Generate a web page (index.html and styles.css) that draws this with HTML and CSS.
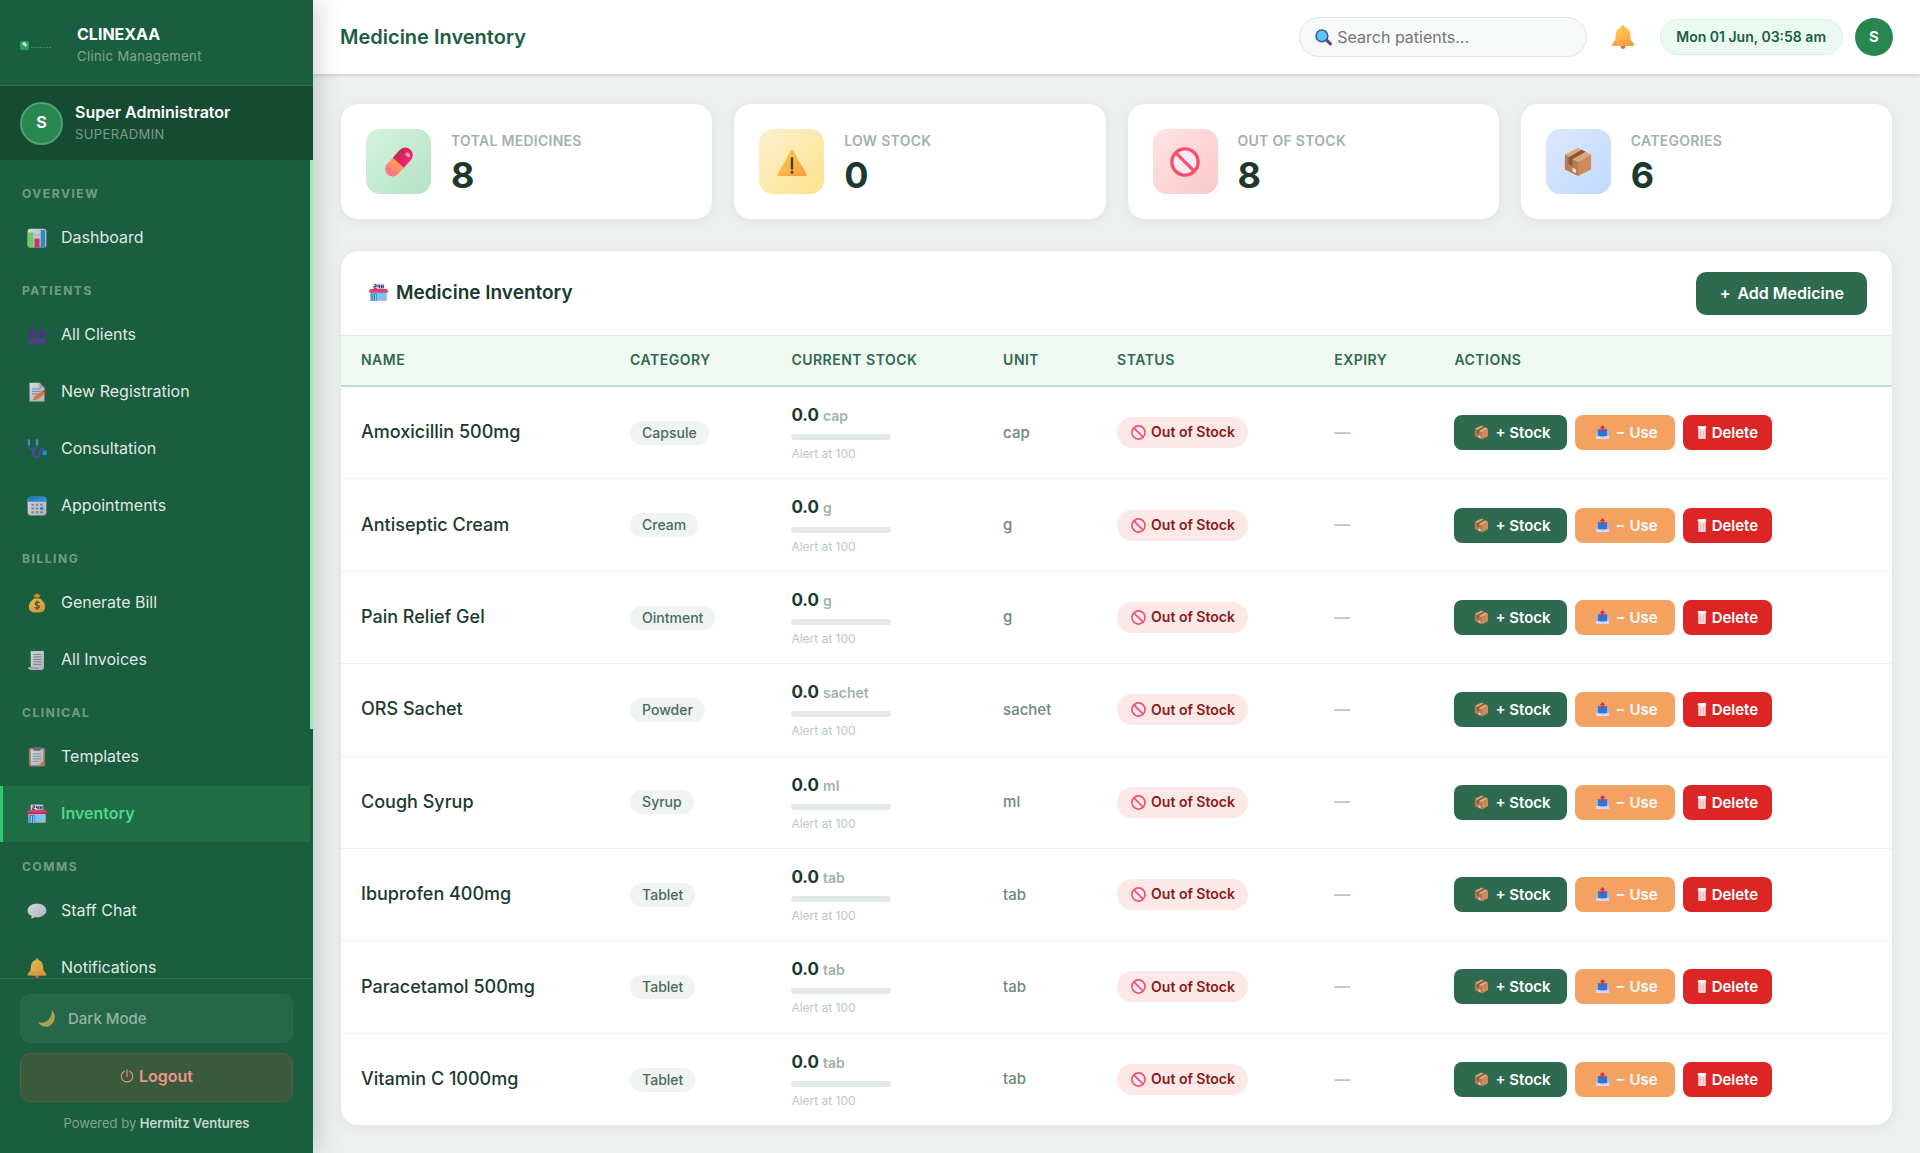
FILE: index.html
```html
<!DOCTYPE html>
<html lang="en">
<head>
    <meta charset="UTF-8">
    <meta name="viewport" content="width=device-width, initial-scale=1.0">
    <title>Medicine Inventory - CLINEXAA</title>
    <link rel="stylesheet" href="styles.css">
</head>
<body>

    <!-- Icon sprite -->
    <svg class="sprite" aria-hidden="true">
        <defs>
            <linearGradient id="g-gold" x1="0" y1="0" x2="1" y2="1"><stop offset="0" stop-color="#ffd34f"/><stop offset="1" stop-color="#f79a3e"/></linearGradient>
            <linearGradient id="g-paper" x1="0" y1="0" x2="1" y2="1"><stop offset="0" stop-color="#f3eef8"/><stop offset="1" stop-color="#c9c1d6"/></linearGradient>
            <linearGradient id="g-pill" x1="0" y1="0" x2="0" y2="1"><stop offset="0" stop-color="#ffa64d"/><stop offset="1" stop-color="#ff6d8a"/></linearGradient>
            <linearGradient id="g-red" x1="0" y1="0" x2="1" y2="0"><stop offset="0" stop-color="#c22a4e"/><stop offset="1" stop-color="#f81f7c"/></linearGradient>
            <linearGradient id="g-blue" x1="0" y1="0" x2="1" y2="1"><stop offset="0" stop-color="#1c72d8"/><stop offset="1" stop-color="#3ba4f5"/></linearGradient>
        </defs>

        <symbol id="i-chart" viewBox="0 0 32 32">
            <rect x="1" y="1" width="30" height="30" rx="4" fill="url(#g-paper)"/>
            <path d="M1 11h30M1 21h30" stroke="#b5adc4" stroke-width="1"/>
            <path d="M3 7h7v24H5a4 4 0 0 1-4-4V9z" fill="#7fdc6d"/>
            <rect x="12" y="17" width="8" height="14" fill="#e0306f"/>
            <path d="M22 3h7v28h-7z" fill="#3b8fe0"/>
        </symbol>
        <symbol id="i-people" viewBox="0 0 32 32">
            <circle cx="9" cy="12" r="6" fill="#4c3583"/>
            <circle cx="23" cy="12" r="6" fill="#4c3583"/>
            <path d="M6 15h6v5H6zM20 15h6v5h-6z" fill="#46307a"/>
            <path d="M1 31v-4c0-5 3-8 8-8 4 0 7 3 7 7 0-4 3-7 7-7 5 0 8 3 8 8v4z" fill="#553b8e"/>
        </symbol>
        <symbol id="i-memo" viewBox="0 0 32 32">
            <path d="M4 1h16l8 8v22H4z" fill="url(#g-paper)"/>
            <path d="M20 1v8h8z" fill="#a9a1b8"/>
            <path d="M8 11h14M8 15h14M8 19h10" stroke="#948ba5" stroke-width="1.6"/>
            <path d="M9 30l2-6L24 14l5 5-12 9z" fill="#f5814e"/>
            <path d="M24 14l3-1 4 3-2 3z" fill="#e0364f"/>
        </symbol>
        <symbol id="i-steth" viewBox="0 0 32 32">
            <path d="M3 9c0 4 2 7 6 8 5-1 7-4 7-8" fill="none" stroke="#4f46b4" stroke-width="3"/>
            <path d="M10 17v5c0 9 11 9 11 0v-3c0-4 6-5 7 1" fill="none" stroke="#4f46b4" stroke-width="3"/>
            <path d="M4 2H3v8M14 2h2v8" fill="none" stroke="#3aa7d0" stroke-width="3.5"/>
            <circle cx="28" cy="22" r="4" fill="#2d8fe8"/>
        </symbol>
        <symbol id="i-calendar" viewBox="0 0 32 32">
            <rect x="1" y="1" width="30" height="30" rx="5" fill="url(#g-paper)"/>
            <path d="M1 9V6a5 5 0 0 1 5-5h20a5 5 0 0 1 5 5v3z" fill="url(#g-blue)"/>
            <path d="M7 14h4M14 14h4M21 14h4M7 20h4M14 20h4M7 26h4M14 26h4M21 26h4" stroke="#8d8a9c" stroke-width="3.4"/>
            <path d="M21 20h5" stroke="#2484e0" stroke-width="4"/>
        </symbol>
        <symbol id="i-money" viewBox="0 0 32 32">
            <path d="M10 2l3 1 3-3 3 3 3-1-3 6h-6z" fill="#f39a2e"/>
            <path d="M13 8h6c6 3 10 9 10 14 0 6-4 9-9 9h-8c-5 0-9-3-9-9 0-5 4-11 10-14z" fill="url(#g-gold)"/>
            <path d="M12 8h8" stroke="#9c4b2b" stroke-width="2"/>
            <path d="M20 16c-1-2-7-2-7 1s7 2 7 5-6 3-8 1M16 12v15" fill="none" stroke="#6d4530" stroke-width="2"/>
        </symbol>
        <symbol id="i-receipt" viewBox="0 0 32 32">
            <path d="M6 1l3 1 3-1 3 1 3-1 3 1 3-1 3 1v27l-3 3H7c-3 0-5-2-5-4h4z" fill="url(#g-paper)"/>
            <path d="M10 7h13M10 11h13M10 15h13M10 19h13M10 23h13" stroke="#8b8499" stroke-width="1.6"/>
            <path d="M2 27h17c0 2 1 4 3 4H7c-3 0-5-2-5-4z" fill="#b9b0c8"/>
        </symbol>
        <symbol id="i-clipboard" viewBox="0 0 32 32">
            <rect x="3" y="1" width="26" height="30" rx="3" fill="#b57f62"/>
            <path d="M6 4h20v19l-6 6H6z" fill="url(#g-paper)"/>
            <path d="M20 29v-6h6z" fill="#f0a58c"/>
            <rect x="10" y="0" width="12" height="6" rx="2" fill="#6f6b7b"/>
            <path d="M9 11h14M9 15h14M9 19h14M9 23h9" stroke="#9a93a8" stroke-width="1.6"/>
        </symbol>
        <symbol id="i-store" viewBox="0 0 32 32">
            <rect x="6" y="1" width="20" height="9" fill="#d8cce6"/>
            <path d="M9 3h3v3H9v3h4M15 3v3h3M18 3v6M21 3v6M24 3v6M21 6h3" fill="none" stroke="#3d2456" stroke-width="1.5"/>
            <rect x="2" y="15" width="28" height="15" fill="#b7abc9"/>
            <path d="M2 10h28l2 4H0z" fill="#e83b68"/>
            <path d="M0 14h32v2H0z" fill="#b52a59"/>
            <rect x="4" y="18" width="9" height="12" fill="#2478c4"/>
            <path d="M6 19h2v11H6zM10 19h2v11h-2z" fill="#6fe0fa"/>
            <rect x="15" y="18" width="13" height="8" fill="#5bd3fb"/>
        </symbol>
        <symbol id="i-chat" viewBox="0 0 32 32">
            <path d="M16 4c8 0 15 5 15 11s-7 11-15 11c-2 0-3 0-4-.5C10 28 7 28 6 28c1-1 2-3 1-4.500C3 22 1 19 1 15 1 9 8 4 16 4z" fill="url(#g-paper)"/>
        </symbol>
        <symbol id="i-bell" viewBox="0 0 32 32">
            <circle cx="16" cy="29" r="3" fill="#d9683b"/>
            <circle cx="16" cy="3" r="2.500" fill="#f5a43c"/>
            <path d="M16 3c6 0 9 4 9.500 9l1 8 4 5c1 1 .5 3-1 3h-27c-1.500 0-2-2-1-3l4-5 1-8C7 7 10 3 16 3z" fill="url(#g-gold)"/>
            <path d="M5.500 21h21l4 5c.5 1 0 2-1 2h-27c-1 0-1.500-1-1-2z" fill="#f3a04a" opacity=".6"/>
        </symbol>
        <symbol id="i-moon" viewBox="0 0 32 32">
            <path d="M25 2c8 8 6 20-3 26-7 4-16 2-20-6 8 3 15 0 19-6 3-4 4-9 4-14z" fill="#e9b85c"/>
        </symbol>
        <symbol id="i-power" viewBox="0 0 32 32">
            <path d="M10 5a13 13 0 1 0 12 0M16 2v15" fill="none" stroke="currentColor" stroke-width="2.500" stroke-linecap="round"/>
        </symbol>
        <symbol id="i-search" viewBox="0 0 32 32">
            <path d="M21 20l8 8" stroke="#7d3d74" stroke-width="6" stroke-linecap="round"/>
            <circle cx="13" cy="13" r="11" fill="#5cc6f2" stroke="#3a5b94" stroke-width="3"/>
        </symbol>
        <symbol id="i-pill" viewBox="0 0 32 32">
            <g transform="rotate(42 16 16)">
                <path d="M8 15h16v11a8 8 0 0 1-16 0z" fill="url(#g-pill)"/>
                <path d="M8 17V6a8 8 0 0 1 16 0v11z" fill="url(#g-red)"/>
                <ellipse cx="18" cy="4" rx="3" ry="2" fill="#ff9cc0"/>
            </g>
        </symbol>
        <symbol id="i-warn" viewBox="0 0 32 32">
            <path d="M14.500 4c.7-1.300 2.300-1.300 3 0l14 25c.6 1 0 2-1 2h-29c-1 0-1.600-1-1-2z" fill="url(#g-gold)"/>
            <path d="M16 12v11" stroke="#4a3d3d" stroke-width="2.600" stroke-linecap="round"/>
            <circle cx="16" cy="27" r="1.600" fill="#4a3d3d"/>
        </symbol>
        <symbol id="i-no" viewBox="0 0 32 32">
            <circle cx="16" cy="16" r="14" fill="#fbeaf6" stroke="#f4506b" stroke-width="3.500"/>
            <path d="M6.500 6.500l19 19" stroke="#f4506b" stroke-width="3.500"/>
        </symbol>
        <symbol id="i-box" viewBox="0 0 32 32">
            <path d="M16 1l14 7-14 8L2 8z" fill="#dba875"/>
            <path d="M2 8l14 8v15L2 24z" fill="#b97a50"/>
            <path d="M30 8l-14 8v15l14-7z" fill="#cd8a5c"/>
            <path d="M20 3l4 2-14 8v7l-4-2v-7z" fill="#86583f"/>
            <path d="M10 22l4 2v4l-4-2z" fill="#f1dce0"/>
        </symbol>
        <symbol id="i-outbox" viewBox="0 0 32 32">
            <path d="M4 12h24l2 10v6c0 1-1 2-2 2H4c-1 0-2-1-2-2v-6z" fill="#bdb8ec"/>
            <path d="M6 9h20v15H6z" fill="#2a77d4"/>
            <path d="M2 24h8l2 2h8l2-2h8v4c0 1-1 2-2 2H4c-1 0-2-1-2-2z" fill="#dcd6f4"/>
            <path d="M16 0l6 7h-4v8h-4V7h-4z" fill="#d8294f"/>
        </symbol>
        <symbol id="i-trash" viewBox="0 0 20 32">
            <path d="M2 5h16v22c0 2-1 3-3 3H5c-2 0-3-1-3-3z" fill="#fbd9dc"/>
            <rect x="1" y="2" width="18" height="6" rx="3" fill="#fff"/>
            <path d="M7 12v14M13 12v14" stroke="#f3a0a5" stroke-width="1.500"/>
        </symbol>
        <symbol id="i-logo" viewBox="0 0 32 32">
            <rect x="0" y="12" width="9" height="9" rx="2" fill="#2f9e63"/>
            <path d="M2 14l3-1 2 3-1 2-3-2z" fill="#b9efcf"/>
            <path d="M11 18.500h20" stroke="#3c8b62" stroke-width="1" stroke-dasharray="2 1"/>
        </symbol>
    </svg>

    <aside class="sidebar">
        <div class="brand">
            <svg class="brand-logo"><use href="#i-logo"/></svg>
            <div>
                <div class="brand-name">CLINEXAA</div>
                <div class="brand-sub">Clinic Management</div>
            </div>
        </div>

        <div class="user">
            <div class="avatar avatar-lg">S</div>
            <div>
                <div class="user-name">Super Administrator</div>
                <div class="user-role">SUPERADMIN</div>
            </div>
        </div>

        <div class="nav-wrap">
            <nav class="nav">
                <div class="nav-label">OVERVIEW</div>
                <a class="nav-item" href="#"><svg><use href="#i-chart"/></svg>Dashboard</a>
                <div class="nav-label">PATIENTS</div>
                <a class="nav-item" href="#"><svg><use href="#i-people"/></svg>All Clients</a>
                <a class="nav-item" href="#"><svg><use href="#i-memo"/></svg>New Registration</a>
                <a class="nav-item" href="#"><svg><use href="#i-steth"/></svg>Consultation</a>
                <a class="nav-item" href="#"><svg><use href="#i-calendar"/></svg>Appointments</a>
                <div class="nav-label">BILLING</div>
                <a class="nav-item" href="#"><svg><use href="#i-money"/></svg>Generate Bill</a>
                <a class="nav-item" href="#"><svg><use href="#i-receipt"/></svg>All Invoices</a>
                <div class="nav-label">CLINICAL</div>
                <a class="nav-item" href="#"><svg><use href="#i-clipboard"/></svg>Templates</a>
                <a class="nav-item active" href="#"><svg><use href="#i-store"/></svg>Inventory</a>
                <div class="nav-label">COMMS</div>
                <a class="nav-item" href="#"><svg><use href="#i-chat"/></svg>Staff Chat</a>
                <a class="nav-item" href="#"><svg><use href="#i-bell"/></svg>Notifications</a>
            </nav>
            <div class="nav-thumb"></div>
        </div>

        <div class="sidebar-footer">
            <button class="btn-dark" type="button"><svg><use href="#i-moon"/></svg>Dark Mode</button>
            <button class="btn-logout" type="button"><svg><use href="#i-power"/></svg>Logout</button>
            <div class="powered">Powered by <strong>Hermitz Ventures</strong></div>
        </div>
    </aside>

    <div class="main">
        <header class="topbar">
            <h1 class="page-title">Medicine Inventory</h1>
            <label class="search">
                <svg><use href="#i-search"/></svg>
                <input type="text" placeholder="Search patients..." aria-label="Search patients">
            </label>
            <button class="bell" type="button" aria-label="Notifications"><svg><use href="#i-bell"/></svg></button>
            <div class="clock">Mon 01 Jun, 03:58 am</div>
            <div class="avatar">S</div>
        </header>

        <main class="content">
            <section class="stats">
                <div class="stat">
                    <div class="stat-icon green"><svg><use href="#i-pill"/></svg></div>
                    <div>
                        <div class="stat-label">TOTAL MEDICINES</div>
                        <div class="stat-value">8</div>
                    </div>
                </div>
                <div class="stat">
                    <div class="stat-icon yellow"><svg><use href="#i-warn"/></svg></div>
                    <div>
                        <div class="stat-label">LOW STOCK</div>
                        <div class="stat-value">0</div>
                    </div>
                </div>
                <div class="stat">
                    <div class="stat-icon red"><svg><use href="#i-no"/></svg></div>
                    <div>
                        <div class="stat-label">OUT OF STOCK</div>
                        <div class="stat-value">8</div>
                    </div>
                </div>
                <div class="stat">
                    <div class="stat-icon blue"><svg><use href="#i-box"/></svg></div>
                    <div>
                        <div class="stat-label">CATEGORIES</div>
                        <div class="stat-value">6</div>
                    </div>
                </div>
            </section>

            <section class="panel">
                <div class="panel-header">
                    <h2 class="panel-title"><svg><use href="#i-store"/></svg>Medicine Inventory</h2>
                    <button class="btn-add" type="button"><span>+</span>Add Medicine</button>
                </div>
                <table class="table">
                    <colgroup>
                        <col class="c-name"><col class="c-cat"><col class="c-stock"><col class="c-unit">
                        <col class="c-status"><col class="c-exp"><col>
                    </colgroup>
                    <thead>
                        <tr>
                            <th>NAME</th>
                            <th>CATEGORY</th>
                            <th>CURRENT STOCK</th>
                            <th>UNIT</th>
                            <th>STATUS</th>
                            <th>EXPIRY</th>
                            <th>ACTIONS</th>
                        </tr>
                    </thead>
                    <tbody id="rows"></tbody>
                </table>
            </section>
        </main>
    </div>

    <script>
        const medicines = [
            ['Amoxicillin 500mg', 'Capsule', 'cap'],
            ['Antiseptic Cream', 'Cream', 'g'],
            ['Pain Relief Gel', 'Ointment', 'g'],
            ['ORS Sachet', 'Powder', 'sachet'],
            ['Cough Syrup', 'Syrup', 'ml'],
            ['Ibuprofen 400mg', 'Tablet', 'tab'],
            ['Paracetamol 500mg', 'Tablet', 'tab'],
            ['Vitamin C 1000mg', 'Tablet', 'tab']
        ];

        document.getElementById('rows').innerHTML = medicines.map(([name, category, unit]) => `
            <tr>
                <td class="med-name">${name}</td>
                <td><span class="tag">${category}</span></td>
                <td>
                    <div class="qty">0.0 <span>${unit}</span></div>
                    <div class="bar"></div>
                    <div class="alert">Alert at 100</div>
                </td>
                <td class="unit">${unit}</td>
                <td><span class="status"><svg><use href="#i-no"/></svg>Out of Stock</span></td>
                <td class="expiry">—</td>
                <td>
                    <div class="actions">
                        <button class="btn btn-stock" type="button"><svg><use href="#i-box"/></svg>+ Stock</button>
                        <button class="btn btn-use" type="button"><svg><use href="#i-outbox"/></svg>− Use</button>
                        <button class="btn btn-delete" type="button"><svg><use href="#i-trash"/></svg>Delete</button>
                    </div>
                </td>
            </tr>`).join('');
    </script>
</body>
</html>
```
FILE: styles.css
```css
* {
    box-sizing: border-box;
}
body {
    margin: 0;
    display: flex;
    min-height: 100vh;
    background: #ecf0ef;
    color: #1b3a2d;
    font-family: Inter, "Liberation Sans", sans-serif;
    font-size: 16px;
    line-height: 1.6;
}
button, input {
    font-family: inherit;
}
button {
    cursor: pointer;
}
svg {
    flex: none;
}
.sprite {
    position: absolute;
    width: 0;
    height: 0;
}

/* Sidebar */
.sidebar {
    position: sticky;
    top: 0;
    z-index: 2;
    flex: none;
    display: flex;
    flex-direction: column;
    width: 313px;
    height: 100vh;
    background: #1b5e3f;
    color: #fff;
    box-shadow: 4px 0 24px rgba(0, 0, 0, 0.18);
}
.brand {
    display: flex;
    align-items: center;
    gap: 25px;
    height: 86px;
    padding: 4px 20px 0;
    border-bottom: 1px solid rgba(255, 255, 255, 0.1);
}
.brand-logo {
    width: 32px;
    height: 32px;
}
.brand-name {
    font-size: 16px;
    font-weight: 700;
    line-height: 22px;
}
.brand-sub {
    font-size: 13px;
    line-height: 22px;
    letter-spacing: 0.03em;
    color: rgba(255, 255, 255, 0.45);
}
.user {
    display: flex;
    align-items: center;
    gap: 12px;
    height: 74px;
    padding: 0 20px;
    background: #164b33;
}
.user-name {
    font-size: 16px;
    font-weight: 600;
    line-height: 22px;
}
.user-role {
    font-size: 13px;
    line-height: 22px;
    letter-spacing: 0.03em;
    color: rgba(255, 255, 255, 0.45);
}
.avatar {
    display: flex;
    align-items: center;
    justify-content: center;
    width: 38px;
    height: 38px;
    border-radius: 50%;
    background: #27874f;
    color: #fff;
    font-size: 15px;
    font-weight: 700;
}
.avatar-lg {
    width: 43px;
    height: 43px;
    border: 2px solid #539f73;
    font-size: 16px;
}
.nav-wrap {
    position: relative;
    flex: 1;
    min-height: 0;
}
.nav {
    height: 100%;
    padding: 10px 3px 9px 0;
    overflow: hidden;
}
.nav-thumb {
    position: absolute;
    top: 0;
    right: 0;
    width: 3px;
    height: 69.5%;
    background: #a5e8bf;
}
.nav-label {
    padding: 16px 22px 8px;
    font-size: 12px;
    font-weight: 700;
    line-height: 16px;
    letter-spacing: 0.13em;
    color: rgba(255, 255, 255, 0.4);
}
.nav-item {
    display: flex;
    align-items: center;
    gap: 14px;
    height: 56px;
    margin-bottom: 1px;
    padding: 0 24px;
    border-left: 3px solid transparent;
    color: rgba(255, 255, 255, 0.88);
    text-decoration: none;
}
.nav-item svg {
    width: 20px;
    height: 20px;
    opacity: 0.85;
}
.nav-item.active {
    border-left-color: #2ecc71;
    background: #1f6d45;
    color: #52d68a;
    font-weight: 600;
}
.nav-item.active svg {
    opacity: 1;
}
.sidebar-footer {
    display: flex;
    flex-direction: column;
    gap: 10px;
    padding: 15px 20px 20px;
    border-top: 1px solid rgba(255, 255, 255, 0.1);
}
.btn-dark,
.btn-logout {
    display: flex;
    align-items: center;
    height: 49px;
    border-radius: 10px;
}
.btn-dark {
    gap: 12px;
    padding: 0 16px;
    border: 1px solid rgba(255, 255, 255, 0.02);
    background: #276749;
    color: rgba(255, 255, 255, 0.5);
    font-size: 15px;
    font-weight: 500;
}
.btn-dark svg {
    width: 19px;
    height: 19px;
    opacity: 0.7;
}
.btn-logout {
    justify-content: center;
    gap: 5px;
    padding: 0 0 3px;
    border: 1px solid #5c5a3f;
    background: #3a5a3c;
    color: #f1948a;
    font-size: 16px;
    font-weight: 600;
}
.btn-logout svg {
    width: 14px;
    height: 14px;
}
.powered {
    padding-top: 1px;
    text-align: center;
    font-size: 13px;
    line-height: 20px;
    color: rgba(255, 255, 255, 0.45);
}
.powered strong {
    font-weight: 600;
    color: rgba(255, 255, 255, 0.75);
}

/* Top bar */
.main {
    flex: 1;
    min-width: 0;
}
.topbar {
    position: relative;
    z-index: 1;
    display: flex;
    align-items: center;
    height: 74px;
    padding: 0 27px;
    background: #fff;
    box-shadow: 0 1px 4px rgba(0, 40, 20, 0.2);
}
.page-title {
    flex: 1;
    margin: 0;
    font-size: 20px;
    font-weight: 600;
    color: #1b5e3f;
}
.search {
    display: flex;
    align-items: center;
    gap: 5px;
    width: 288px;
    height: 40px;
    padding: 0 15px;
    border: 1px solid #dde4e1;
    border-radius: 20px;
    background: #f7f9f8;
}
.search svg {
    width: 17px;
    height: 17px;
}
.search input {
    flex: 1;
    min-width: 0;
    padding: 0;
    border: 0;
    outline: 0;
    background: none;
    font-size: 16px;
}
.search input::placeholder {
    color: #757575;
}
.bell {
    display: flex;
    margin: 0 25px 0 24px;
    padding: 0;
    border: 0;
    background: none;
}
.bell svg {
    width: 24px;
    height: 24px;
}
.clock {
    margin-right: 12px;
    padding: 0 16px 0 15px;
    border: 1px solid #d5f2e0;
    border-radius: 18px;
    background: #ebfaf1;
    color: #1b5e3f;
    font-size: 14px;
    font-weight: 600;
    line-height: 34px;
}

/* Stat cards */
.content {
    padding: 29px 27px 27px;
}
.stats {
    display: grid;
    grid-template-columns: repeat(4, 1fr);
    gap: 20px;
    margin-bottom: 30px;
}
.stat,
.panel {
    border: 1px solid #e4eae7;
    border-radius: 18px;
    background: #fff;
    box-shadow: 0 2px 10px rgba(0, 40, 20, 0.06);
}
.stat {
    display: flex;
    align-items: center;
    gap: 20px;
    padding: 25px;
}
.stat-icon {
    display: flex;
    align-items: center;
    justify-content: center;
    width: 65px;
    height: 65px;
    border-radius: 14px;
}
.stat-icon svg {
    width: 30px;
    height: 30px;
}
.green { background: linear-gradient(135deg, #d5f2de, #b4e2c6); }
.yellow { background: linear-gradient(135deg, #fdf0d0, #fde28a); }
.red { background: linear-gradient(135deg, #fde4e4, #fcc8c8); }
.blue { background: linear-gradient(135deg, #dbe9fe, #bfdafe); }
.stat-label {
    margin-bottom: 6px;
    font-size: 14px;
    font-weight: 600;
    line-height: 20px;
    letter-spacing: 0.02em;
    color: #9fb3a6;
}
.stat-value {
    font-size: 36px;
    font-weight: 700;
    line-height: 36px;
}

/* Inventory table */
.panel {
    overflow: hidden;
}
.panel-header {
    display: flex;
    align-items: center;
    justify-content: space-between;
    height: 84px;
    padding: 0 25px 0 28px;
}
.panel-title {
    display: flex;
    align-items: center;
    gap: 8px;
    margin: 0;
    font-size: 19px;
    font-weight: 600;
}
.panel-title svg {
    width: 19px;
    height: 19px;
}
.btn-add {
    display: flex;
    align-items: center;
    gap: 7px;
    height: 43px;
    padding: 0 23px 0 24px;
    border: 0;
    border-radius: 10px;
    background: #2d6a4f;
    color: #fff;
    font-size: 16px;
    font-weight: 600;
}
.table {
    width: 100%;
    table-layout: fixed;
    border-collapse: separate;
    border-spacing: 0;
}
.c-name { width: 17.35%; }
.c-cat { width: 10.4%; }
.c-stock { width: 13.65%; }
.c-unit { width: 7.35%; }
.c-status { width: 14%; }
.c-exp { width: 7.75%; }
.table th {
    height: 52px;
    padding: 0 20px;
    border-top: 1px solid #d8ece1;
    border-bottom: 2px solid #b7e4c7;
    background: #f0f9f2;
    color: #2d6a4f;
    text-align: left;
    font-size: 14px;
    font-weight: 600;
    letter-spacing: 0.035em;
}
.table td {
    padding: 15px 20px;
    border-bottom: 1px solid #edf1ef;
}
.table tr:last-child td {
    border-bottom: 0;
}
.table .med-name {
    padding-right: 0;
    font-size: 18px;
    font-weight: 500;
}
.tag {
    display: inline-block;
    padding: 0 12px;
    border-radius: 12px;
    background: #eff3f1;
    color: #4a6b5b;
    font-size: 14px;
    font-weight: 500;
    line-height: 24px;
}
.qty {
    font-size: 17px;
    font-weight: 700;
}
.qty span {
    font-size: 14px;
    font-weight: 600;
    color: #9fb3a6;
}
.bar {
    width: 100px;
    height: 6px;
    margin: 5px 0 4px;
    border-radius: 3px;
    background: #e2eae6;
}
.alert {
    font-size: 12px;
    color: #b8c9c0;
}
.unit {
    font-size: 15px;
    font-weight: 500;
    color: #6b8a7a;
}
.status {
    display: inline-flex;
    align-items: center;
    gap: 5px;
    height: 31px;
    padding: 0 13px 0 14px;
    border-radius: 16px;
    background: #fde8e8;
    color: #8b1a1a;
    font-size: 14px;
    font-weight: 600;
    vertical-align: middle;
}
.status svg {
    width: 15px;
    height: 15px;
}
.expiry {
    color: #b8c9c0;
    font-weight: 600;
}
.actions {
    display: flex;
    gap: 8px;
}
.btn {
    display: flex;
    align-items: center;
    gap: 6px;
    height: 35px;
    border: 0;
    border-radius: 8px;
    color: #fff;
    font-size: 15px;
    font-weight: 600;
}
.btn svg {
    width: 15px;
    height: 15px;
}
.btn-stock {
    padding: 0 16px 0 20px;
    background: #2d6a4f;
}
.btn-use {
    padding: 0 17px 0 20px;
    background: #f4a261;
}
.btn-delete {
    gap: 5px;
    padding: 0 14px;
    background: #dc2626;
}
.btn-delete svg {
    width: 10px;
}
```
